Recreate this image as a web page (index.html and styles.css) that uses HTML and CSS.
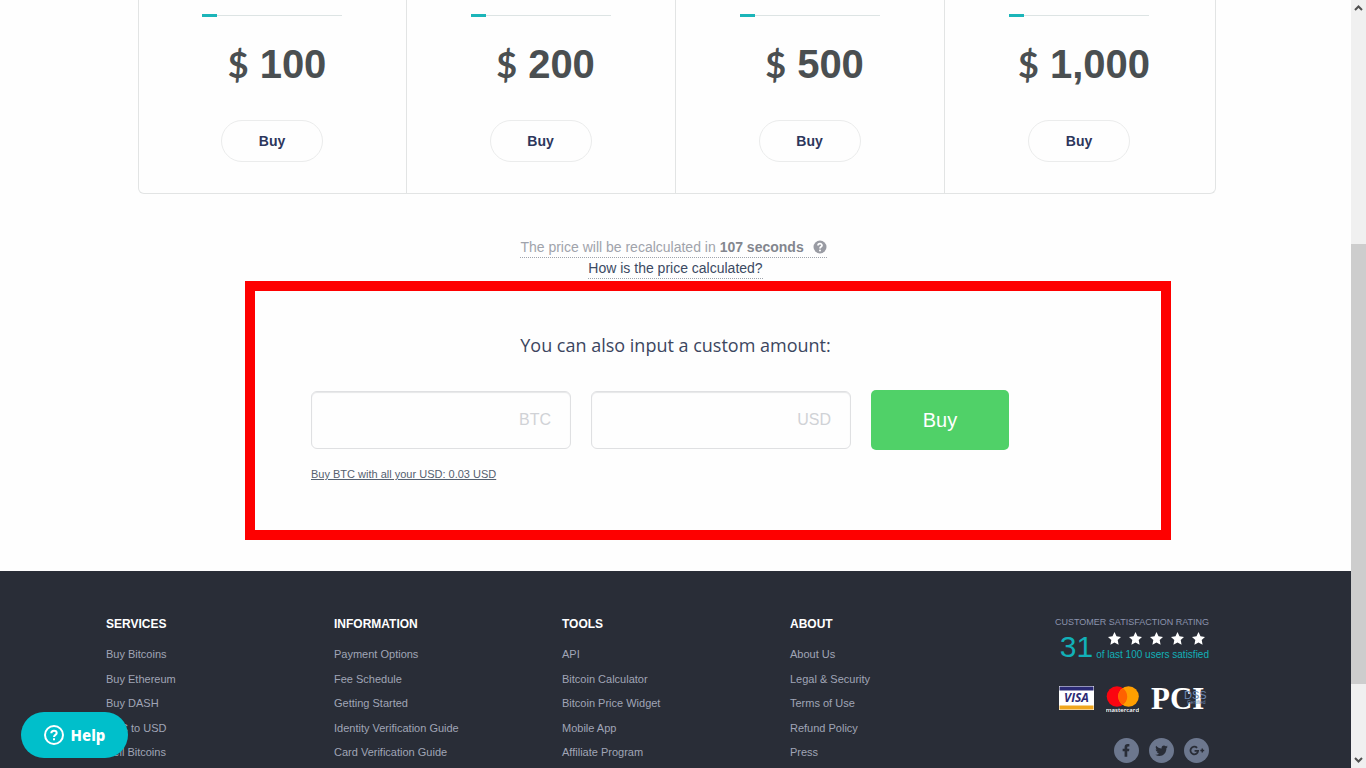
FILE: index.html
```html
<!DOCTYPE html>
<html lang="en">
<head>
    <meta charset="UTF-8">
    <meta name="viewport" content="width=device-width, initial-scale=1.0">
    <title>Buy Bitcoins</title>
    <link rel="stylesheet" href="styles.css">
</head>

<body>
    <div id="page">
        <main>
            <div class="prices">
                <div class="price">
                    <div class="divider"></div>
                    <p class="amount"><span class="currency">$</span> 100</p>
                    <button class="btn-round">Buy</button>
                </div>
                <div class="price">
                    <div class="divider"></div>
                    <p class="amount"><span class="currency">$</span> 200</p>
                    <button class="btn-round">Buy</button>
                </div>
                <div class="price">
                    <div class="divider"></div>
                    <p class="amount"><span class="currency">$</span> 500</p>
                    <button class="btn-round">Buy</button>
                </div>
                <div class="price">
                    <div class="divider"></div>
                    <p class="amount"><span class="currency">$</span> 1,000</p>
                    <button class="btn-round">Buy</button>
                </div>
            </div>

            <div class="recalc">
                <p class="recalc-timer">The price will be recalculated in <b>107 seconds</b>
                    <svg class="hint" viewBox="0 0 14 14" width="14" height="14">
                        <circle cx="7" cy="7" r="6.5" fill="#999ba3"/>
                        <path d="M5 5.6C5 3 9 3 9 5.4C9 6.8 7 6.8 7 8.4" fill="none" stroke="#fff" stroke-width="1.7"/>
                        <circle cx="7" cy="10.4" r="1" fill="#fff"/>
                    </svg>
                </p>
                <a href="#" class="recalc-link">How is the price calculated?</a>
            </div>

            <section class="custom">
                <h2>You can also input a custom amount:</h2>
                <form class="custom-form">
                    <input type="text" placeholder="BTC" aria-label="Amount in BTC">
                    <input type="text" placeholder="USD" aria-label="Amount in USD">
                    <button type="button" class="btn-buy">Buy</button>
                </form>
                <a href="#" class="buy-all">Buy BTC with all your USD: 0.03 USD</a>
            </section>
        </main>

        <footer>
            <nav class="links">
                <div class="links-col">
                    <h3>SERVICES</h3>
                    <ul>
                        <li><a href="#">Buy Bitcoins</a></li>
                        <li><a href="#">Buy Ethereum</a></li>
                        <li><a href="#">Buy DASH</a></li>
                        <li><a href="#">BTC to USD</a></li>
                        <li><a href="#">Sell Bitcoins</a></li>
                    </ul>
                </div>
                <div class="links-col">
                    <h3>INFORMATION</h3>
                    <ul>
                        <li><a href="#">Payment Options</a></li>
                        <li><a href="#">Fee Schedule</a></li>
                        <li><a href="#">Getting Started</a></li>
                        <li><a href="#">Identity Verification Guide</a></li>
                        <li><a href="#">Card Verification Guide</a></li>
                    </ul>
                </div>
                <div class="links-col">
                    <h3>TOOLS</h3>
                    <ul>
                        <li><a href="#">API</a></li>
                        <li><a href="#">Bitcoin Calculator</a></li>
                        <li><a href="#">Bitcoin Price Widget</a></li>
                        <li><a href="#">Mobile App</a></li>
                        <li><a href="#">Affiliate Program</a></li>
                    </ul>
                </div>
                <div class="links-col">
                    <h3>ABOUT</h3>
                    <ul>
                        <li><a href="#">About Us</a></li>
                        <li><a href="#">Legal &amp; Security</a></li>
                        <li><a href="#">Terms of Use</a></li>
                        <li><a href="#">Refund Policy</a></li>
                        <li><a href="#">Press</a></li>
                    </ul>
                </div>
            </nav>

            <div class="trust">
                <p class="rating-title">CUSTOMER SATISFACTION RATING</p>
                <div class="rating">
                    <span class="rating-score">31</span>
                    <div class="rating-info">
                        <svg class="stars" viewBox="0 0 98 13" width="98" height="13" fill="#fff">
                            <defs>
                                <path id="star" d="M6.5 0L8.5 4.3L13 4.9L9.7 8.1L10.6 12.7L6.5 10.4L2.4 12.7L3.3 8.1L0 4.9L4.5 4.3Z"/>
                            </defs>
                            <use href="#star"/>
                            <use href="#star" x="21"/>
                            <use href="#star" x="42"/>
                            <use href="#star" x="63"/>
                            <use href="#star" x="84"/>
                        </svg>
                        <p class="rating-note">of last 100 users satisfied</p>
                    </div>
                </div>
                <div class="cards">
                    <svg viewBox="0 0 35 24" width="35" height="24">
                        <rect width="35" height="24" fill="#fff"/>
                        <rect x="0.5" y="0.5" width="34" height="4" fill="#2b2a75"/>
                        <rect x="0.5" y="19.5" width="34" height="4" fill="#f0a61d"/>
                        <text x="17.5" y="16" text-anchor="middle" class="visa">VISA</text>
                    </svg>
                    <svg viewBox="0 0 33 28" width="33" height="28">
                        <circle cx="11" cy="10.5" r="10.3" fill="#fb0510"/>
                        <circle cx="22.5" cy="10.5" r="10.3" fill="#ff9f00"/>
                        <path d="M16.75 2A10.3 10.3 0 0 1 16.75 19A10.3 10.3 0 0 1 16.75 2Z" fill="#ff6200"/>
                        <text x="16.5" y="26" text-anchor="middle" class="mastercard">mastercard</text>
                    </svg>
                    <svg class="pci-logo" viewBox="0 0 58 28" width="58" height="28">
                        <text x="0" y="23" class="pci">PCI</text>
                        <text x="33" y="13" class="dss">DSS</text>
                        <text x="36" y="18" class="certified">Certified</text>
                    </svg>
                </div>
                <div class="social">
                    <a href="#" aria-label="Facebook">
                        <svg viewBox="0 0 26 26" width="25" height="25">
                            <path d="M11 19.5V13.8H9V11.2H11V9.4C11 7.2 12.2 6.2 14.2 6.2H16V8.8H14.9C14 8.8 13.8 9.2 13.8 9.9V11.2H16L15.6 13.8H13.8V19.5Z" fill="#292d37"/>
                        </svg>
                    </a>
                    <a href="#" aria-label="Twitter">
                        <svg viewBox="0 0 26 26" width="25" height="25">
                            <path d="M19.5 8.9C19 9.1 18.5 9.3 18 9.3C18.6 9 19 8.5 19.2 7.8C18.6 8.2 18 8.4 17.4 8.5C15.7 6.8 12.6 8 13.1 11C10.8 10.9 8.7 9.8 7.4 8.1C6.6 9.5 7 11 8.2 11.9C7.8 11.9 7.4 11.8 7 11.6C7 13 8 14.1 9.3 14.4C8.9 14.5 8.5 14.5 8.1 14.4C8.5 15.5 9.4 16.2 10.6 16.3C9.4 17.2 8 17.6 6.5 17.4C12.2 20.9 18.3 17 18.1 10.7C18.7 10.2 19.1 9.6 19.5 8.9Z" fill="#292d37"/>
                        </svg>
                    </a>
                    <a href="#" aria-label="Google Plus">
                        <svg viewBox="0 0 26 26" width="25" height="25">
                            <path d="M13.6 10.2A4 4 0 1 0 14.7 13.3H11" fill="none" stroke="#292d37" stroke-width="1.9"/>
                            <path d="M17 13H21M19 11V15" stroke="#292d37" stroke-width="1.5"/>
                        </svg>
                    </a>
                </div>
            </div>
        </footer>
    </div>

    <div id="scrollbar">
        <svg viewBox="0 0 15 16" width="15" height="16"><path d="M4 10L7.5 6.5L11 10" fill="none" stroke="#505050" stroke-width="2"/></svg>
        <div class="track">
            <div class="thumb"></div>
        </div>
        <svg viewBox="0 0 15 16" width="15" height="16"><path d="M4 6L7.5 9.5L11 6" fill="none" stroke="#505050" stroke-width="2"/></svg>
    </div>

    <button id="help">
        <svg viewBox="0 0 20 20" width="20" height="20" fill="none" stroke="#fff" stroke-width="2">
            <circle cx="10" cy="10" r="9"/>
            <path d="M7.3 8.2C7.3 4.7 12.7 4.9 12.7 8C12.7 9.9 10 9.9 10 12"/>
            <path d="M10 13.2V15.2"/>
        </svg>
        Help
    </button>
</body>
</html>
```
FILE: styles.css
```css
html {
    background-color: #fefefe;
    font-family: "Liberation Sans", Arial, sans-serif;
    font-size: 14px;
}

body {
    display: flex;
    margin: 0;
    height: 100vh;
    overflow: hidden;
}

h2, h3, p, ul {
    margin: 0;
    padding: 0;
}

button {
    font-family: inherit;
    cursor: pointer;
}

#page {
    flex: 1;
    display: flex;
    flex-direction: column;
}

/* prices */
.prices {
    display: grid;
    grid-template-columns: 268fr 269fr 269fr 270fr;
    margin: 0 135px 0 138px;
    border: 1px solid #e2e4e4;
    border-top: none;
    border-radius: 0 0 6px 6px;
}

.price {
    display: flex;
    flex-direction: column;
    align-items: center;
    padding: 14px 1px 31px 0;
    border-right: 1px solid #e2e4e4;
}

.price:last-child {
    padding-right: 2px;
    border-right: none;
}

.divider {
    width: 140px;
    height: 3px;
    background: linear-gradient(#1cb5b9, #1cb5b9) 0 0 / 15px 3px no-repeat,
                linear-gradient(#dde4e4, #dde4e4) 0 1px / 140px 1px no-repeat;
}

.amount {
    margin: 24px 0 32px;
    padding-left: 10px;
    font-size: 40px;
    line-height: 47px;
    font-weight: bold;
    color: #4a4f51;
}

.currency {
    font-family: Lato, sans-serif;
    font-size: 36px;
    line-height: 1;
}

.btn-round {
    width: 102px;
    height: 42px;
    border: 1px solid #ebecec;
    border-radius: 21px;
    background: none;
    color: #2d365c;
    font-size: 14px;
    font-weight: bold;
}

/* recalculation */
.recalc {
    display: flex;
    flex-direction: column;
    align-items: center;
    margin-top: 43px;
    line-height: 20px;
}

.recalc-timer,
.recalc-link {
    border-bottom: 1px dotted #a0a4ac;
}

.recalc-timer {
    margin-right: 4px;
    color: #a0a3ab;
}

.recalc-timer b {
    color: #83868e;
}

.hint {
    margin-left: 5px;
    vertical-align: -2px;
}

.recalc-link {
    color: #3c4a63;
    text-decoration: none;
}

/* custom amount */
.custom {
    margin: 2px 180px 31px 245px;
    padding: 42px 121px 48px 56px;
    border: 10px solid #fe0000;
}

.custom h2 {
    font-family: "Open Sans", sans-serif;
    font-size: 18px;
    line-height: 24px;
    font-weight: 400;
    text-align: center;
    color: #3c4660;
}

.custom-form {
    display: flex;
    align-items: center;
    gap: 20px;
    margin: 33px 0 16px;
}

.custom-form input {
    box-sizing: border-box;
    width: 260px;
    height: 58px;
    padding: 0 19px;
    border: 1px solid #dfe0e2;
    border-radius: 6px;
    background: none;
    box-shadow: inset 0 1px 1px #e6e7e8;
    font-family: inherit;
    font-size: 16px;
    text-align: right;
}

.custom-form input::placeholder {
    color: #d0d2d6;
}

.btn-buy {
    width: 138px;
    height: 60px;
    border: none;
    border-radius: 5px;
    background-color: #50d168;
    color: white;
    font-size: 20px;
}

.buy-all {
    display: block;
    width: fit-content;
    font-size: 11px;
    line-height: 16px;
    color: #55606f;
}

/* footer */
footer {
    flex: 1;
    display: flex;
    justify-content: space-between;
    padding: 45px 142px 0 106px;
    background-color: #292d37;
}

.links {
    display: grid;
    grid-template-columns: repeat(4, 228px);
}

.links h3 {
    margin-bottom: 13px;
    font-size: 12px;
    line-height: 16px;
    color: white;
}

.links ul {
    display: flex;
    flex-direction: column;
    justify-content: space-between;
    height: 116px;
    list-style: none;
    font-size: 11px;
    line-height: 18px;
}

.links a {
    color: #a0a5b6;
    text-decoration: none;
}

.trust {
    display: flex;
    flex-direction: column;
    align-items: flex-end;
}

.rating-title {
    font-size: 9px;
    line-height: 12px;
    white-space: nowrap;
    color: #8b93ad;
}

.rating {
    display: flex;
    align-items: center;
    gap: 3px;
    height: 37px;
    color: #12b0b8;
}

.rating-score {
    font-size: 30px;
}

.rating-info {
    display: flex;
    flex-direction: column;
    align-items: flex-end;
}

.stars {
    margin: 0 3px 3px 0;
}

.rating-note {
    font-size: 10px;
    line-height: 14px;
    white-space: nowrap;
}

.cards {
    display: flex;
    gap: 12px;
    margin-top: 21px;
}

.visa {
    font: italic bold 12px "Open Sans", sans-serif;
    fill: #2b2a75;
}

.mastercard {
    font: 600 6px "Open Sans", sans-serif;
    fill: white;
}

.pci-logo {
    overflow: visible;
}

.pci {
    font: bold 31px "Liberation Serif", serif;
    fill: white;
}

.dss {
    font: 11px "Liberation Sans", sans-serif;
    fill: #6f8bb5;
}

.certified {
    font: 5px "Liberation Sans", sans-serif;
    fill: #6f8bb5;
}

.social {
    display: flex;
    gap: 10px;
    margin-top: 24px;
}

.social a {
    width: 25px;
    height: 25px;
    border-radius: 50%;
    background-color: #6c778e;
}

/* scrollbar */
#scrollbar {
    display: flex;
    flex-direction: column;
    width: 15px;
    background-color: #f0f0f0;
}

.track {
    flex: 1;
    padding-top: 228px;
}

.thumb {
    height: 440px;
    background-color: #cdcdcd;
}

/* help */
#help {
    position: fixed;
    left: 21px;
    bottom: 10px;
    display: flex;
    align-items: center;
    justify-content: center;
    gap: 7px;
    width: 107px;
    height: 46px;
    border: none;
    border-radius: 23px;
    background-color: #00bfcb;
    color: white;
    font-family: "Noto Sans", sans-serif;
    font-size: 15px;
    font-weight: 800;
}
```
